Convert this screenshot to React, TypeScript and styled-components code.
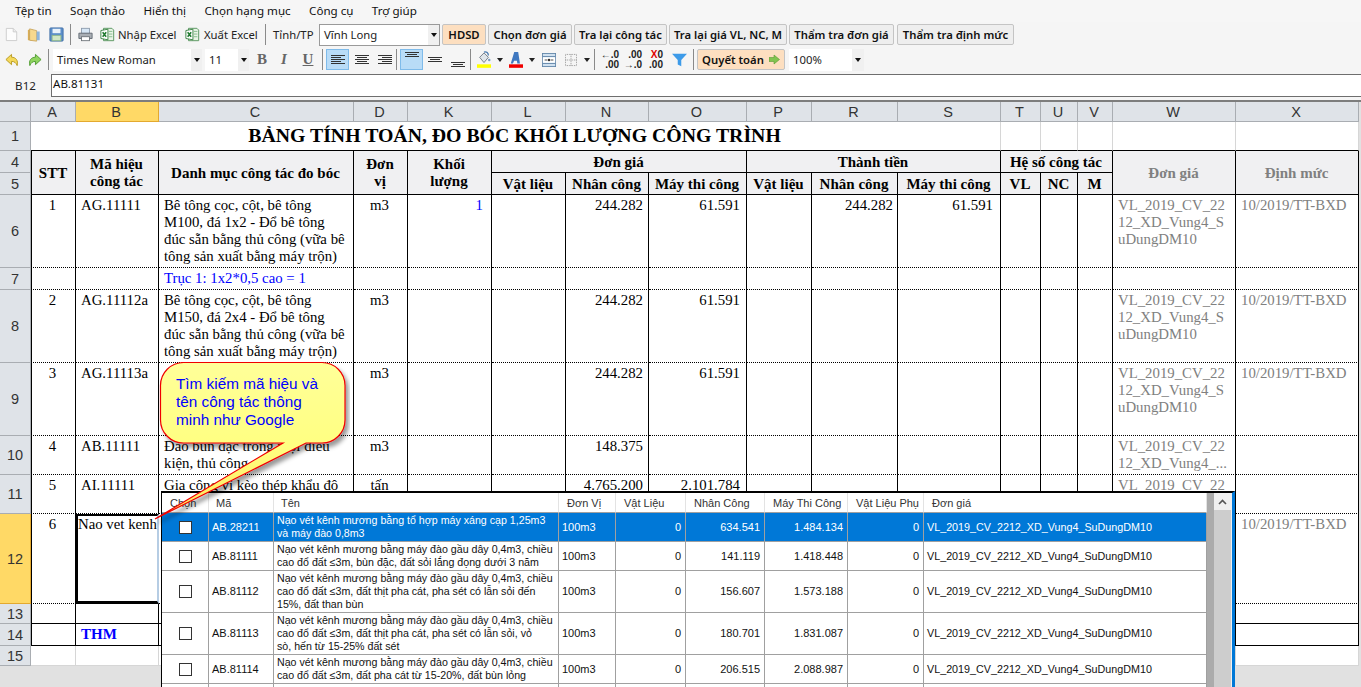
import React from 'react';
import styled, { createGlobalStyle } from 'styled-components';

const Global = createGlobalStyle`
  html, body { margin: 0; padding: 0; overflow: hidden; background: #e1e1e1; }
  #root { width: 1361px; height: 687px; }
`;
const UI = `"Noto Sans", "Open Sans", sans-serif`;
const SERIF = `"Liberation Serif", "Times New Roman", serif`;
const ARIAL = `"Liberation Sans", Arial, sans-serif`;

const Page = styled.div`
  position: relative; width: 1361px; height: 687px; overflow: hidden;
  display: flex; flex-direction: column; background: #e1e1e1;
`;
const MenuBar = styled.nav`
  height: 22px; background: #f6f6f6; display: flex; align-items: center; gap: 18.4px; padding-left: 15px;
`;
const MenuItem = styled.span`font: 11.6px/22px ${UI}; color: #111; white-space: nowrap;`;
const ToolRow = styled.div<{ $h: number }>`
  height: ${p => p.$h}px; background: #f5f5f5; display: flex; align-items: center; padding-left: 4px;
`;
const Slot = styled.span<{ $w: number; $l?: number; $on?: boolean }>`
  flex: none; display: flex; align-items: center; justify-content: center;
  width: ${p => p.$w}px; height: 21px; margin-left: ${p => p.$l ?? 0}px; box-sizing: border-box;
  background: ${p => (p.$on ? '#b9dcf7' : 'transparent')};
  border: 1px solid ${p => (p.$on ? '#7fbbea' : 'transparent')};
`;
const Sep = styled.span<{ $l: number }>`
  flex: none; width: 1px; height: 21px; background: #8a8a8a; margin-left: ${p => p.$l}px;
`;
const ToolLabel = styled.span<{ $l: number; $w: number }>`
  flex: none; width: ${p => p.$w}px; margin-left: ${p => p.$l}px; font: 11.3px ${UI}; color: #222; white-space: nowrap;
`;
const Combo = styled.div<{ $w: number; $l: number; $border?: boolean }>`
  flex: none; width: ${p => p.$w}px; height: 22px; margin-left: ${p => p.$l}px; box-sizing: border-box;
  display: flex; align-items: center; background: #fff;
  border: ${p => (p.$border ? '1px solid #9a9a9a' : 'none')};
  font: 11.3px ${UI}; color: #222; overflow: hidden;
`;
const ComboText = styled.span`flex: 1; padding-left: 4px; white-space: nowrap;`;
const ComboArrow = styled.span<{ $w?: number }>`
  flex: none; width: ${p => p.$w ?? 11}px; align-self: stretch; background: #f0f0f0;
  display: flex; align-items: center; justify-content: center;
  &::after { content: ''; border: 3px solid transparent; border-top: 4px solid #111; border-bottom: 0; }
`;
const Caret = styled.span<{ $l: number }>`
  flex: none; margin-left: ${p => p.$l}px; border: 3.5px solid transparent; border-top: 4px solid #222; border-bottom: 0;
`;
const ActionButton = styled.button<{ $w: number; $l: number; $hot?: boolean }>`
  flex: none; width: ${p => p.$w}px; height: 21px; margin-left: ${p => p.$l}px; padding: 0;
  display: flex; align-items: center; justify-content: center; gap: 5px;
  background: ${p => (p.$hot ? '#fddfc0' : '#eeeeee')};
  border: 1px solid #c4c4c4; border-radius: 2px;
  font: 600 11.3px ${UI}; color: #111; white-space: nowrap;
`;
const FontMark = styled.span<{ $i?: boolean; $u?: boolean }>`
  font: ${p => (p.$i ? 'italic ' : '')}bold 15px ${SERIF}; color: #666;
  text-decoration: ${p => (p.$u ? 'underline' : 'none')};
`;
const DecMark = styled.span`
  font: bold 10px/10px ${ARIAL}; color: #222; text-align: right; white-space: pre;
  b { color: #e00000; }
`;
const FormulaBar = styled.div`height: 27px; padding-top: 2px; box-sizing: border-box; background: #f5f5f5; display: flex;`;
const NameBox = styled.div`width: 51px; font: 11.6px/23px ${UI}; color: #222; text-align: center;`;
const FormulaInput = styled.div`
  flex: 1; height: 23px; box-sizing: border-box; border: 1px solid #6e6e6e; border-right: 0; background: #fff;
  font: 11.6px/18px ${UI}; color: #111; padding-left: 1px;
`;
const GridRule = styled.div`height: 3px; box-sizing: border-box; background: #f5f5f5; border-bottom: 2px solid #7d7d7d;`;

const Sheet = styled.table`
  table-layout: fixed; border-collapse: separate; border-spacing: 0; width: 1359px;
  background: #fff;
`;
const RowTr = styled.tr<{ $h: number }>`height: ${p => p.$h}px;`;
const ColHead = styled.th<{ $on?: boolean }>`
  padding: 0 2px 0 0; box-sizing: border-box; font: 400 14.5px ${ARIAL}; color: #333;
  background: ${p => (p.$on ? '#ffd966' : '#dfe3e8')};
  border-right: 1px solid ${p => (p.$on ? '#e3a92f' : '#a9adb2')};
  border-bottom: 1px solid ${p => (p.$on ? '#e3a92f' : '#a9adb2')};
`;
const RowHead = styled(ColHead)`padding: 0;`;
const Title = styled.td`
  padding: 0 2px 2px 0; text-align: center; font: bold 19.8px ${SERIF}; color: #000;
  border-bottom: 1px solid #000; border-right: 1px solid #d6d6d6; white-space: nowrap;
`;
const Plain = styled.td<{ $black?: boolean }>`
  padding: 0; border-right: 1px solid #d6d6d6;
  border-bottom: 1px solid ${p => (p.$black ? '#000' : '#d6d6d6')};
`;
const HeadCell = styled.td<{ $grey?: boolean; $first?: boolean }>`
  padding: 1px 1px 0 0; background: #f0f0f2; text-align: center; vertical-align: middle;
  font: bold 15px/17px ${SERIF}; color: ${p => (p.$grey ? '#808080' : '#000')};
  border-right: 1px solid #000; border-bottom: 1px solid #000; white-space: nowrap;
  ${p => (p.$first ? 'border-left: 1px solid #000;' : '')}
`;
const Cell = styled.td<{ $align: string; $pad: number; $grey?: boolean; $blue?: boolean; $bottom: string; $first?: boolean; $strong?: boolean }>`
  padding: 2px ${p => (p.$align === 'left' ? 0 : p.$pad)}px 0 ${p => (p.$align === 'left' ? p.$pad : 0)}px;
  vertical-align: top; overflow: hidden; white-space: nowrap; box-sizing: border-box;
  text-align: ${p => p.$align};
  font: ${p => (p.$strong ? 'bold 15px' : '14.8px')}/17px ${SERIF};
  color: ${p => (p.$grey ? '#808080' : p.$blue ? '#0000ff' : '#000')};
  border-right: 1px solid #000;
  border-bottom: ${p => p.$bottom};
  ${p => (p.$first ? 'border-left: 1px solid #000;' : '')}
`;
const ActiveCell = styled.td`
  padding: 0; vertical-align: top; overflow: hidden; white-space: nowrap; box-sizing: border-box;
  font: 14.8px/17px ${SERIF}; color: #000; background: #fff;
  border-style: solid; border-color: #000 #b6cde4 #000 #000; border-width: 2px 2px 3px 2px;
`;

const Popup = styled.div`
  position: absolute; left: 161px; top: 491px; width: 1074px; height: 196px; box-sizing: border-box;
  background: #ababab; border-top: 2px solid #000; border-left: 1px solid #000; border-right: 3px solid #0078d7;
  display: flex; overflow: hidden;
`;
const PopupTable = styled.table`
  flex: none; table-layout: fixed; border-collapse: separate; border-spacing: 0; width: 1045px; align-self: flex-start; background: #fff;
`;
const PopHead = styled.th<{ $pad?: number }>`
  padding: 0 0 0 ${p => p.$pad ?? 8}px; text-align: left; font: 400 11px ${ARIAL}; color: #333; background: #fff;
  border-right: 1px solid #e3e3e3; border-bottom: 1px solid #a0a0a0; white-space: nowrap;
`;
const PopCell = styled.td<{ $sel?: boolean; $align?: string }>`
  padding: 0 ${p => (p.$align === 'right' ? 4 : 0)}px 0 ${p => (p.$align === 'right' ? 0 : 3)}px;
  text-align: ${p => p.$align ?? 'left'}; vertical-align: middle; white-space: nowrap;
  font: 11px/13px ${ARIAL};
  color: ${p => (p.$sel ? '#fff' : '#111')}; background: ${p => (p.$sel ? '#0078d7' : '#fff')};
  border-right: 1px solid #a0a0a0; border-bottom: 1px solid #a0a0a0;
`;
const NameCell = styled(PopCell)`font-size: 10.65px;`;
const PriceCell = styled(PopCell)`font-size: 10.75px;`;
const CheckCell = styled(PopCell)`padding: 0; text-align: center;`;
const Check = styled.span`
  display: inline-block; vertical-align: middle; width: 13px; height: 13px; box-sizing: border-box; background: #fff; border: 1px solid #333;
`;
const Gutter = styled.div`flex: none; width: 7px;`;
const ScrollTrack = styled.div`flex: none; width: 17px; background: #cdcdcd; border-right: 1px solid #f0f0f0;`;
const ScrollBtn = styled.div`
  height: 17px; background: #f0f0f0; display: flex; align-items: center; justify-content: center;
`;

const Callout = styled.div`
  position: absolute; left: 150px; top: 358px; width: 200px; height: 170px;
`;
const CalloutArt = styled.svg`position: absolute; left: 0; top: 0;`;
const CalloutText = styled.div`
  position: absolute; left: 26px; top: 17px; font: 15.3px/18px ${ARIAL}; color: #0000ff; white-space: nowrap;
`;

const widths = [31, 45, 83, 195, 54, 84, 74, 83, 98, 65, 86, 103, 40, 37, 35, 123, 123];
const letters = ['A', 'B', 'C', 'D', 'K', 'L', 'N', 'O', 'P', 'R', 'S', 'T', 'U', 'V', 'W', 'X'];
const aligns: [string, number][] = [
  ['center', 2], ['left', 5], ['left', 5], ['center', 2], ['right', 8], ['right', 5], ['right', 5], ['right', 6],
  ['right', 5], ['right', 4], ['right', 7], ['center', 0], ['center', 0], ['center', 0], ['left', 5], ['left', 5],
];
const W = ['VL_2019_CV_22', '12_XD_Vung4_S', 'uDungDM10'];
const W2 = ['VL_2019_CV_22', '12_XD_Vung4_...'];
const TT = '10/2019/TT-BXD';
const desc = (m: string, d: string) => [
  'Bê tông cọc, cột, bê tông', `${m}, đá ${d} - Đổ bê tông`, 'đúc sẵn bằng thủ công (vữa bê', 'tông sản xuất bằng máy trộn)',
];
type R = { n: number; h: number; v: Record<number, string | string[]>; blue?: number[] };
const body: R[] = [
  { n: 6, h: 73, v: { 0: '1', 1: 'AG.11111', 2: desc('M100', '1x2'), 3: 'm3', 4: '1', 6: '244.282', 7: '61.591', 9: '244.282', 10: '61.591', 14: W, 15: TT }, blue: [4] },
  { n: 7, h: 22, v: { 2: 'Trục 1: 1x2*0,5 cao = 1' }, blue: [2] },
  { n: 8, h: 73, v: { 0: '2', 1: 'AG.11112a', 2: desc('M150', '2x4'), 3: 'm3', 6: '244.282', 7: '61.591', 14: W, 15: TT } },
  { n: 9, h: 73, v: { 0: '3', 1: 'AG.11113a', 3: 'm3', 6: '244.282', 7: '61.591', 14: W, 15: TT } },
  { n: 10, h: 39, v: { 0: '4', 1: 'AB.11111', 2: ['Đào bùn đặc trong mọi điều', 'kiện, thủ công'], 3: 'm3', 6: '148.375', 14: W2 } },
  { n: 11, h: 39, v: { 0: '5', 1: 'AI.11111', 2: ['Gia công vì kèo thép khẩu độ', 'lớn'], 3: 'tấn', 6: '4.765.200', 7: '2.101.784', 14: W2 } },
  { n: 12, h: 90, v: { 0: '6', 15: TT } },
  { n: 13, h: 20, v: {} },
  { n: 14, h: 22, v: { 1: 'THM' }, blue: [1] },
];
const L = (t: string | string[] | undefined) =>
  Array.isArray(t) ? t.map((x, i) => <React.Fragment key={i}>{x}{i < t.length - 1 && <br />}</React.Fragment>) : t;

const N = 'Nạo vét kênh mương bằng máy đào gầu dây 0,4m3, chiều';
const popCols = [47, 65, 285, 57, 70, 79, 83, 76, 283];
const popHeads = ['Chọn', 'Mã', 'Tên', 'Đơn Vị', 'Vật Liệu', 'Nhân Công', 'Máy Thi Công', 'Vật Liệu Phụ', 'Đơn giá'];
const popPads = [8, 7, 7, 8, 8, 8, 8, 8, 8];
const DG = 'VL_2019_CV_2212_XD_Vung4_SuDungDM10';
const popRows: { h: number; code: string; name: string[]; nc: string; m: string; sel?: boolean }[] = [
  { h: 29, code: 'AB.28211', name: ['Nạo vét kênh mương bằng tổ hợp máy xáng cạp 1,25m3', 'và máy đào 0,8m3'], nc: '634.541', m: '1.484.134', sel: true },
  { h: 29, code: 'AB.81111', name: [N, 'cao đổ đất ≤3m, bùn đặc, đất sỏi lắng đọng dưới 3 năm'], nc: '141.119', m: '1.418.448' },
  { h: 42, code: 'AB.81112', name: [N, 'cao đổ đất ≤3m, đất thịt pha cát, pha sét có lẫn sỏi đến', '15%, đất than bùn'], nc: '156.607', m: '1.573.188' },
  { h: 42, code: 'AB.81113', name: [N, 'cao đổ đất ≤3m, đất thịt pha cát, pha sét có lẫn sỏi, vỏ', 'sò, hến từ 15-25% đất sét'], nc: '180.701', m: '1.831.087' },
  { h: 29, code: 'AB.81114', name: [N, 'cao đổ đất ≤3m, đất pha cát từ 15-20%, đất bùn lỏng'], nc: '206.515', m: '2.088.987' },
  { h: 42, code: 'AB.81115', name: [N, 'cao đổ đất ≤3m, đất sét', ''], nc: '231.020', m: '2.340.112' },
];

const Align = ({ kind, y = 4, n = 5 }: { kind: 'l' | 'c' | 'r'; y?: number; n?: number }) => (
  <svg width="16" height="18" viewBox="0 0 16 18">
    {Array.from({ length: n }).map((_, i) => {
      const w = i % 2 ? 10 : 14;
      const x = kind === 'l' ? 1 : kind === 'r' ? 15 - w : 8 - w / 2;
      return <rect key={i} x={x} y={y + i * 2} width={w} height="1" fill="#333" />;
    })}
  </svg>
);
const ExcelIcon = () => (
  <svg width="17" height="17" viewBox="0 0 17 17">
    <path d="M4 1.5h9.5l2 2v12H4z" fill="#e9f4e6" stroke="#4f8f57" />
    <path d="M1 4l8-1.5v12L1 13z" fill="#fff" stroke="#2f7d3a" />
    <path d="M3 6l4 5M7 6l-4 5" stroke="#1f7a2f" strokeWidth="1.8" />
    <path d="M10 5h4M10 8h4M10 11h4" stroke="#7db886" />
  </svg>
);

export default function App() {
  return (
    <Page>
      <Global />
      <MenuBar>
        {['Tệp tin', 'Soạn thảo', 'Hiển thị', 'Chọn hạng mục', 'Công cụ', 'Trợ giúp'].map(m => <MenuItem key={m}>{m}</MenuItem>)}
      </MenuBar>
      <ToolRow $h={25}>
        <Slot $w={15}>
          <svg width="15" height="17" viewBox="0 0 15 17"><path d="M1.5 1.5h8l4 4v10h-12z" fill="#fcfcfc" stroke="#c8c8c8" /><path d="M9.5 1.5v4h4" fill="#eee" stroke="#c8c8c8" /></svg>
        </Slot>
        <Slot $w={16} $l={7}>
          <svg width="16" height="16" viewBox="0 0 16 16"><path d="M1 2h6v12H1z" fill="#d9ad55" /><path d="M3 1l8 2v12l-8-1z" fill="#f7d98e" stroke="#c9a55c" /><path d="M11 4h3.5v10H11z" fill="#8fb6dc" /></svg>
        </Slot>
        <Slot $w={17} $l={6}>
          <svg width="17" height="17" viewBox="0 0 17 17"><rect x="1" y="1" width="15" height="15" rx="1" fill="#5b8ec9" stroke="#3f6ea6" /><rect x="4" y="2" width="9" height="5" fill="#e8f1fa" /><rect x="3.5" y="9.5" width="10" height="6" fill="#cfe6c4" stroke="#8fb88a" /></svg>
        </Slot>
        <Sep $l={5} />
        <Slot $w={17} $l={6}>
          <svg width="17" height="17" viewBox="0 0 17 17"><rect x="4" y="1.5" width="9" height="6" fill="#d6e6f5" stroke="#8a9aab" /><path d="M1 7h15v6H1z" fill="#a8adb3" stroke="#5f6670" /><rect x="4" y="11" width="9" height="4.5" fill="#fff" stroke="#6c7278" /></svg>
        </Slot>
        <Slot $w={17} $l={5}><ExcelIcon /></Slot>
        <ToolLabel $l={2} $w={59}>Nhập Excel</ToolLabel>
        <Slot $w={17} $l={7}><ExcelIcon /></Slot>
        <ToolLabel $l={3} $w={54}>Xuất Excel</ToolLabel>
        <Sep $l={7} />
        <ToolLabel $l={7} $w={41}>Tỉnh/TP</ToolLabel>
        <Combo $w={121} $l={5} $border>
          <ComboText>Vĩnh Long</ComboText>
          <ComboArrow />
        </Combo>
        <ActionButton $w={44} $l={2} $hot>HDSD</ActionButton>
        <ActionButton $w={84} $l={2}>Chọn đơn giá</ActionButton>
        <ActionButton $w={93} $l={2}>Tra lại công tác</ActionButton>
        <ActionButton $w={118} $l={2}>Tra lại giá VL, NC, M</ActionButton>
        <ActionButton $w={105} $l={2}>Thẩm tra đơn giá</ActionButton>
        <ActionButton $w={117} $l={3}>Thẩm tra định mức</ActionButton>
      </ToolRow>
      <ToolRow $h={25}>
        <Slot $w={16}>
          <svg width="16" height="16" viewBox="0 0 15 15"><path d="M7 1.500L1 7l6 5.500V9c3 0 5 1.500 6 4.500C14.500 8 11.500 4.500 7 4.500z" fill="#f5d95a" stroke="#b89a20" /></svg>
        </Slot>
        <Slot $w={16} $l={7}>
          <svg width="16" height="16" viewBox="0 0 15 15"><path d="M8 1.500L14 7l-6 5.500V9c-3 0-5 1.500-6 4.500C.5 8 3.500 4.500 8 4.500z" fill="#8fd45f" stroke="#4f9a30" /></svg>
        </Slot>
        <Sep $l={5} />
        <Combo $w={149} $l={4}>
          <ComboText>Times New Roman</ComboText>
          <ComboArrow />
        </Combo>
        <Combo $w={44} $l={3}>
          <ComboText>11</ComboText>
          <ComboArrow />
        </Combo>
        <Slot $w={16} $l={5}><FontMark>B</FontMark></Slot>
        <Slot $w={16} $l={6}><FontMark $i>I</FontMark></Slot>
        <Slot $w={16} $l={8}><FontMark $u>U</FontMark></Slot>
        <Sep $l={6} />
        <Slot $w={23} $l={3} $on><Align kind="l" /></Slot>
        <Slot $w={21} $l={2}><Align kind="c" /></Slot>
        <Slot $w={21} $l={2}><Align kind="r" /></Slot>
        <Sep $l={1} />
        <Slot $w={23} $l={3} $on><Align kind="c" y={1} n={3} /></Slot>
        <Slot $w={21} $l={1}><Align kind="c" y={6} n={3} /></Slot>
        <Slot $w={21} $l={2}><Align kind="c" y={11} n={3} /></Slot>
        <Sep $l={2} />
        <Slot $w={16} $l={5}>
          <svg width="16" height="19" viewBox="0 0 16 19"><path d="M3 7l5-5 5 5-5 6z" fill="#dfe5ea" stroke="#6a7480" /><path d="M8 1c3-1 5 1 5 4" stroke="#4a7bb0" fill="none" strokeWidth="1.500" /><circle cx="14" cy="10" r="1.400" fill="#7a9cc0" /><rect y="15" width="16" height="4" fill="#ffff00" /></svg>
        </Slot>
        <Caret $l={5} />
        <Slot $w={16} $l={5}>
          <svg width="16" height="19" viewBox="0 0 16 19"><path d="M6 1h4.500l2 13H9.500l-.4-3H5.800L4.500 14H2z" fill="#3f78c0" /><rect y="15" width="16" height="4" fill="#f00000" /></svg>
        </Slot>
        <Caret $l={5} />
        <Slot $w={16} $l={6}>
          <svg width="16" height="16" viewBox="0 0 16 16"><rect x=".5" y=".5" width="15" height="15" fill="#cfe0ef" stroke="#5f84a8" /><path d="M1 4h14M1 12h14" stroke="#5f84a8" /><rect x="1" y="5" width="14" height="6" fill="#fff" /><path d="M3 8h3M10 8h3" stroke="#333" /><circle cx="8" cy="8" r="1.500" fill="#333" /></svg>
        </Slot>
        <Slot $w={14} $l={7}>
          <svg width="14" height="14" viewBox="0 0 14 14"><path d="M.5.5h13v13H.5zM7 .5v13M.5 7h13" fill="none" stroke="#888" strokeDasharray="1 1" /></svg>
        </Slot>
        <Caret $l={6} />
        <Sep $l={4} />
        <Slot $w={16} $l={7}><DecMark>{'←.0\n.00'}</DecMark></Slot>
        <Slot $w={16} $l={7}><DecMark>{'.00\n→.0'}</DecMark></Slot>
        <Slot $w={16} $l={7}><DecMark><b>X</b>{'0\n.00'}</DecMark></Slot>
        <Slot $w={17} $l={7}>
          <svg width="17" height="16" viewBox="0 0 17 16"><path d="M0 1h17l-6.500 7v7l-4-2V8z" fill="#3d9be9" /></svg>
        </Slot>
        <Sep $l={5} />
        <ActionButton $w={88} $l={3} $hot>
          Quyết toán
          <svg width="11" height="11" viewBox="0 0 11 11"><path d="M0 3.500h5V1l5.500 4.500L5 10V7.500H0z" fill="#82c450" stroke="#5c9a34" strokeWidth=".6" /></svg>
        </ActionButton>
        <Combo $w={75} $l={4}>
          <ComboText>100%</ComboText>
          <ComboArrow $w={12} />
        </Combo>
      </ToolRow>
      <FormulaBar>
        <NameBox>B12</NameBox>
        <FormulaInput>AB.81131</FormulaInput>
      </FormulaBar>
      <GridRule />
      <Sheet>
        <colgroup>{widths.map((w, i) => <col key={i} style={{ width: w }} />)}</colgroup>
        <tbody>
          <RowTr $h={20}>
            <ColHead />
            {letters.map(l => <ColHead key={l} $on={l === 'B'}>{l}</ColHead>)}
          </RowTr>
          <RowTr $h={29}>
            <RowHead>1</RowHead>
            <Title colSpan={11}>BẢNG TÍNH TOÁN, ĐO BÓC KHỐI LƯỢNG CÔNG TRÌNH</Title>
            {[0, 1, 2, 3, 4].map(i => <Plain key={i} $black />)}
          </RowTr>
          <RowTr $h={22}>
            <RowHead>4</RowHead>
            <HeadCell rowSpan={2} $first>STT</HeadCell>
            <HeadCell rowSpan={2}>Mã hiệu<br />công tác</HeadCell>
            <HeadCell rowSpan={2}>Danh mục công tác đo bóc</HeadCell>
            <HeadCell rowSpan={2}>Đơn<br />vị</HeadCell>
            <HeadCell rowSpan={2}>Khối<br />lượng</HeadCell>
            <HeadCell colSpan={3}>Đơn giá</HeadCell>
            <HeadCell colSpan={3}>Thành tiền</HeadCell>
            <HeadCell colSpan={3}>Hệ số công tác</HeadCell>
            <HeadCell rowSpan={2} $grey>Đơn giá</HeadCell>
            <HeadCell rowSpan={2} $grey>Định mức</HeadCell>
          </RowTr>
          <RowTr $h={22}>
            <RowHead>5</RowHead>
            {['Vật liệu', 'Nhân công', 'Máy thi công', 'Vật liệu', 'Nhân công', 'Máy thi công', 'VL', 'NC', 'M'].map((t, i) => <HeadCell key={i}>{t}</HeadCell>)}
          </RowTr>
          {body.map(r => (
            <RowTr key={r.n} $h={r.h}>
              <RowHead $on={r.n === 12}>{r.n}</RowHead>
              {aligns.map(([a, p], i) => {
                if (r.n === 12 && i === 1) return <ActiveCell key={i}>Nao vet kenh</ActiveCell>;
                const bottom = r.n === 14 || r.n === 13 ? '1px solid #000' : '1px dotted #000';
                return (
                  <Cell key={i} $align={a} $pad={p} $first={i === 0} $bottom={bottom}
                    $grey={i >= 14} $blue={r.blue?.includes(i)} $strong={r.n === 14}>
                    {L(r.v[i])}
                  </Cell>
                );
              })}
            </RowTr>
          ))}
          <RowTr $h={20}>
            <RowHead>15</RowHead>
            {letters.map(l => <Plain key={l} />)}
          </RowTr>
        </tbody>
      </Sheet>

      <Popup>
        <PopupTable>
          <colgroup>{popCols.map((w, i) => <col key={i} style={{ width: w }} />)}</colgroup>
          <tbody>
            <RowTr $h={20}>{popHeads.map((h, i) => <PopHead key={h} $pad={popPads[i]}>{h}</PopHead>)}</RowTr>
            {popRows.map(r => (
              <RowTr key={r.code} $h={r.h}>
                <CheckCell $sel={r.sel}><Check /></CheckCell>
                <PopCell $sel={r.sel}>{r.code}</PopCell>
                <NameCell $sel={r.sel}>{L(r.name)}</NameCell>
                <PopCell $sel={r.sel}>100m3</PopCell>
                <PopCell $sel={r.sel} $align="right">0</PopCell>
                <PopCell $sel={r.sel} $align="right">{r.nc}</PopCell>
                <PopCell $sel={r.sel} $align="right">{r.m}</PopCell>
                <PopCell $sel={r.sel} $align="right">0</PopCell>
                <PriceCell $sel={r.sel}>{DG}</PriceCell>
              </RowTr>
            ))}
          </tbody>
        </PopupTable>
        <Gutter />
        <ScrollTrack>
          <ScrollBtn>
            <svg width="9" height="6" viewBox="0 0 9 6"><path d="M1 5l3.500-3.500L8 5" fill="none" stroke="#555" strokeWidth="1.600" /></svg>
          </ScrollBtn>
        </ScrollTrack>
      </Popup>

      <Callout>
        <CalloutArt width="200" height="170" viewBox="0 0 200 170">
          <defs>
            <linearGradient id="cg" x1="0" y1="0" x2="0" y2="1">
              <stop offset="0" stopColor="#ffff99" />
              <stop offset="0.55" stopColor="#ffff80" />
              <stop offset="1" stopColor="#ffe45c" />
            </linearGradient>
            <filter id="cs" x="-10%" y="-10%" width="125%" height="125%">
              <feDropShadow dx="3" dy="4" stdDeviation="2" floodColor="#000" floodOpacity="0.4" />
            </filter>
          </defs>
          <path
            d="M30.500 4.500H172a23 23 0 0 1 23 23V62a23 23 0 0 1 -23 23H156L5 161L133 85H33.500a23 23 0 0 1 -23 -23V27.500a23 23 0 0 1 23 -23z"
            fill="url(#cg)" stroke="#f00000" strokeWidth="1.200" filter="url(#cs)"
          />
        </CalloutArt>
        <CalloutText>Tìm kiếm mã hiệu và<br />tên công tác thông<br />minh như Google</CalloutText>
      </Callout>
    </Page>
  );
}
